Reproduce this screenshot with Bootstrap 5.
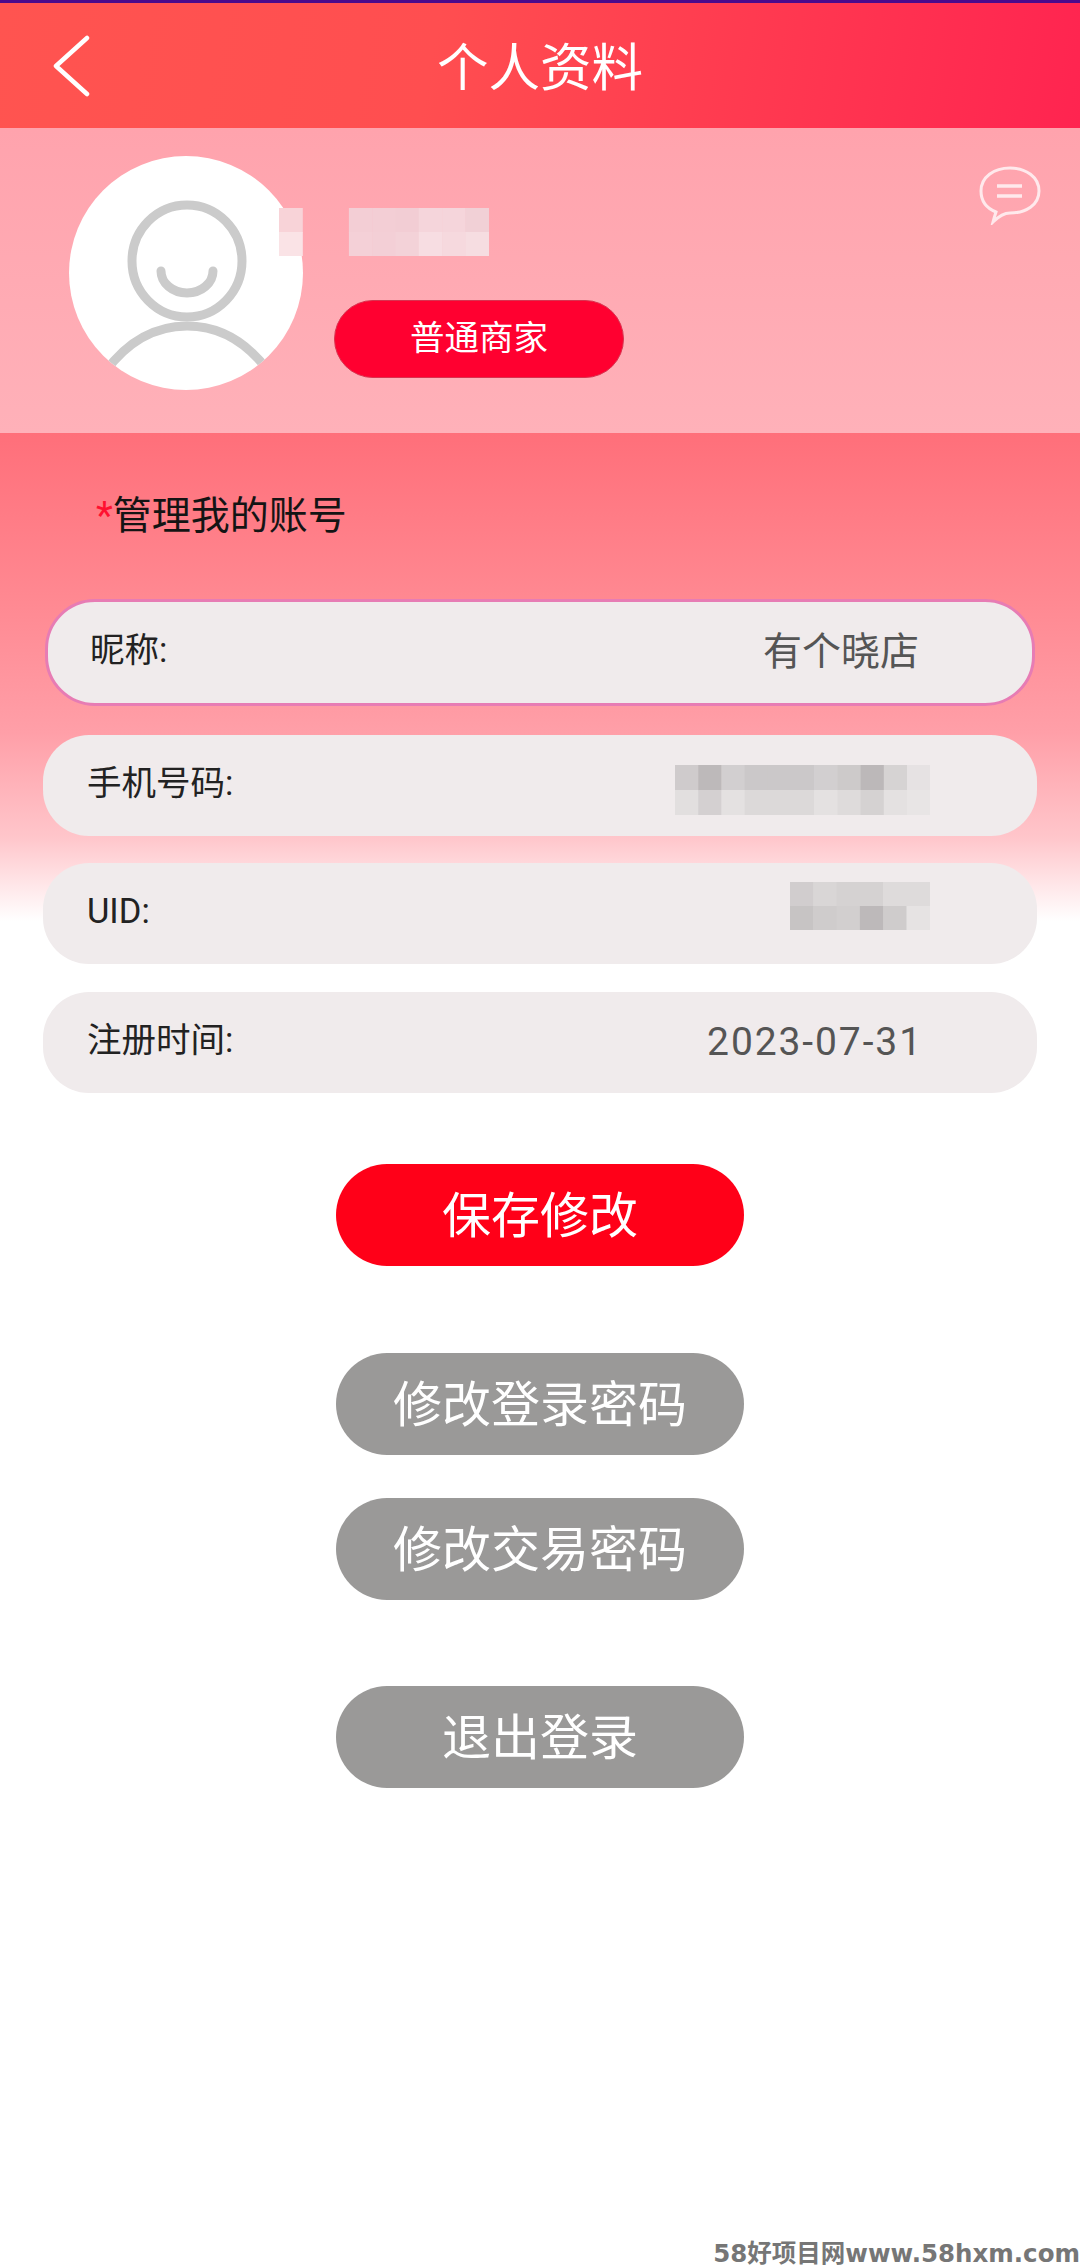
<!DOCTYPE html>
<html lang="zh-CN">
<head>
  <meta charset="UTF-8">
  <meta name="viewport" content="width=device-width, initial-scale=1.0">
  <link href="https://cdn.jsdelivr.net/npm/bootstrap@5.3.0/dist/css/bootstrap.min.css" rel="stylesheet">
  <title>个人资料</title>
  <style>
    body {
      font-family: Roboto, "Noto Sans CJK SC", sans-serif;
      background-color: #fff;
      height: 2268px;
      border-top: 3px solid #4b0a8c;
    }

    .top-bar {
      height: 125px;
      padding: 0 50px;
      color: #fff;
      background: linear-gradient(100deg, #ff5450 0%, #ff4e50 40%, #ff2450 100%);
    }

    .top-bar h1 {
      font-size: 51.5px;
      font-weight: 400;
      margin: 6px 0 0;
    }

    .back-slot {
      width: 42px;
    }

    .profile-band {
      height: 305px;
      padding: 28px 38px 0 69px;
      background: linear-gradient(#ffa3ad, #ffb1b9);
    }

    .avatar-pic {
      width: 234px;
      height: 234px;
      flex-shrink: 0;
    }

    .name-col {
      padding: 52px 0 0 31px;
    }

    .name-mosaic {
      display: block;
      margin-left: -55px;
      margin-bottom: 44px;
    }

    .shop-tag {
      width: 290px;
      height: 78px;
      line-height: 74px;
      text-align: center;
      color: #fff;
      font-size: 34.5px;
      background-color: #ff0030;
      border: 1px solid #d9324f;
    }

    .chat-icon {
      margin-top: 9px;
    }

    .account-area {
      padding: 0 43px;
      background: linear-gradient(#ff6f7a 0, #ff8992 170px, #ff9fa8 300px, #ffc6cb 405px, #fff 488px) no-repeat;
    }

    .account-title {
      height: 166px;
      padding: 55px 0 0 53px;
      font-size: 39px;
      line-height: 56px;
      color: #141414;
    }

    .account-title span {
      color: #ff1030;
    }

    .info-row {
      height: 101px;
      margin-bottom: 27.5px;
      padding: 0 115px 0 44px;
      border-radius: 46px;
      background-color: #f0ebec;
      font-size: 34.5px;
      color: #222;
    }

    .info-row.is-active {
      height: 107px;
      margin: 0 2px 28.5px;
      padding-left: 42px;
      padding-right: 113px;
      border: 3px solid #e77cb4;
      border-radius: 50px;
    }

    .info-label {
      margin-bottom: 3px;
    }

    .info-val {
      font-size: 39px;
      color: #555;
    }

    .info-date {
      letter-spacing: 1.9px;
      margin-right: -1px;
    }

    .info-mosaic {
      margin-right: -8px;
    }

    .is-phone {
      margin-top: 10px;
    }

    .is-uid {
      margin-bottom: 16px;
    }

    .action-stack {
      padding-top: 43.5px;
    }

    .action-btn {
      width: 408px;
      height: 102px;
      padding: 5px 0 0;
      font-size: 49px;
      color: #fff;
      border: 0;
      background-color: #9a9998;
    }

    .action-btn.is-primary {
      background-color: #ff0018;
      margin-bottom: 87px;
    }

    .gap-small {
      margin-bottom: 43px;
    }

    .gap-large {
      margin-bottom: 86px;
    }

    .site-mark {
      margin-top: auto;
      font-family: "DejaVu Sans", "Noto Sans CJK SC", sans-serif;
      font-weight: 700;
      font-size: 24.5px;
      line-height: 28px;
      color: #767676;
      white-space: nowrap;
    }
  </style>
</head>
<body class="d-flex flex-column">
  <header class="top-bar d-flex align-items-center justify-content-between">
    <a class="back-slot d-block" href="#" aria-label="返回">
      <svg width="42" height="62" viewBox="0 0 42 62" class="d-block"><polyline points="37,3 6,31 37,59" fill="none" stroke="#fff" stroke-width="4.5" stroke-linecap="round" stroke-linejoin="round"/></svg>
    </a>
    <h1>个人资料</h1>
    <div class="back-slot"></div>
  </header>

  <section class="profile-band d-flex">
    <svg class="avatar-pic" viewBox="0 0 234 234">
      <defs><clipPath id="avatarClip"><circle cx="117" cy="117" r="117"/></clipPath></defs>
      <circle cx="117" cy="117" r="117" fill="#fff"/>
      <g fill="none" stroke="#cbcbcb" stroke-width="9" clip-path="url(#avatarClip)">
        <ellipse cx="118" cy="105" rx="55" ry="56"/>
        <path d="M92 115 A26 22 0 0 0 144 115" stroke-linecap="round"/>
        <path d="M36 216 C58 186 85 170 118 170 S178 186 200 216"/>
      </g>
    </svg>
    <div class="name-col flex-grow-1">
      <svg class="name-mosaic" width="210" height="48" viewBox="0 0 210 48">
        <g id="nameCells"></g>
      </svg>
      <div class="shop-tag rounded-pill">普通商家</div>
    </div>
    <svg class="chat-icon" width="64" height="60" viewBox="0 0 64 60">
      <path d="M18 47 C8 43 3 35 3 26 C3 12 16 3 32 3 C48 3 61 12 61 26 C61 40 48 48 32 48 C27 48 22 50 15 57 C16 53 17 50 18 47 Z" fill="none" stroke="#ffe9ec" stroke-width="3"/>
      <path d="M19 21 H44 M19 31 H44" stroke="#ffe9ec" stroke-width="3.5"/>
    </svg>
  </section>

  <section class="account-area">
    <div class="account-title"><span>*</span>管理我的账号</div>

    <div class="info-row is-active d-flex align-items-center justify-content-between">
      <div class="info-label">昵称:</div>
      <div class="info-val">有个晓店</div>
    </div>
    <div class="info-row d-flex align-items-center justify-content-between">
      <div class="info-label">手机号码:</div>
      <svg class="info-mosaic is-phone" width="255" height="50" viewBox="0 0 255 50"><g id="phoneCells"></g></svg>
    </div>
    <div class="info-row d-flex align-items-center justify-content-between">
      <div class="info-label">UID:</div>
      <svg class="info-mosaic is-uid" width="140" height="48" viewBox="0 0 140 48"><g id="uidCells"></g></svg>
    </div>
    <div class="info-row d-flex align-items-center justify-content-between">
      <div class="info-label">注册时间:</div>
      <div class="info-val info-date">2023-07-31</div>
    </div>
  </section>

  <section class="action-stack d-flex flex-column align-items-center">
    <button class="btn action-btn is-primary rounded-pill" type="button">保存修改</button>
    <button class="btn action-btn gap-small rounded-pill" type="button">修改登录密码</button>
    <button class="btn action-btn gap-large rounded-pill" type="button">修改交易密码</button>
    <button class="btn action-btn rounded-pill" type="button">退出登录</button>
  </section>

  <div class="site-mark align-self-end">58好项目网www.58hxm.com</div>

  <script src="https://cdn.jsdelivr.net/npm/bootstrap@5.3.0/dist/js/bootstrap.bundle.min.js"></script>
  <script>
    // blurred-out values, each cell is one mosaic block
    function drawCells(id, cellW, cellH, rows) {
      const group = document.getElementById(id);
      rows.forEach((row, y) => {
        row.forEach((fill, x) => {
          if (!fill) return;
          const rect = document.createElementNS('http://www.w3.org/2000/svg', 'rect');
          rect.setAttribute('x', x * cellW);
          rect.setAttribute('y', y * cellH);
          rect.setAttribute('width', cellW + 0.5);
          rect.setAttribute('height', cellH + 0.5);
          rect.setAttribute('fill', fill);
          group.appendChild(rect);
        });
      });
    }

    drawCells('nameCells', 23.3, 24, [
      ['#f8d3d8', null, null, '#f3ced5', '#f3ced5', '#f2cdd4', '#f5d5db', '#f5d5db', '#f1d0d6'],
      ['#fae3e6', null, null, '#f4d0d7', '#f3cfd6', '#f3d2d8', '#f7dde2', '#f6d9de', '#f6dde1']
    ]);
    drawCells('phoneCells', 23.2, 25, [
      ['#cfcbcc', '#bdb9ba', '#d2cfd0', '#cbc8c9', '#cbc8c9', '#cbc8c9', '#d2cfd0', '#cdcaca', '#bcb8b9', '#d6d3d3', '#e6e2e3'],
      ['#e2dfdf', '#d4d0d1', '#e4e1e1', '#dcd9d9', '#dcd9d9', '#dcd9d9', '#e4e1e1', '#dedbdb', '#d5d2d2', '#e4e1e1', '#e8e5e5']
    ]);
    drawCells('uidCells', 23.3, 24, [
      ['#d1cdce', '#d9d6d6', '#d5d2d2', '#d5d2d2', '#dedbdb', '#dedbdb'],
      ['#c7c4c4', '#cfcccc', '#d2cfcf', '#bdb9ba', '#cfcccc', '#e6e3e3']
    ]);
  </script>
</body>
</html>
